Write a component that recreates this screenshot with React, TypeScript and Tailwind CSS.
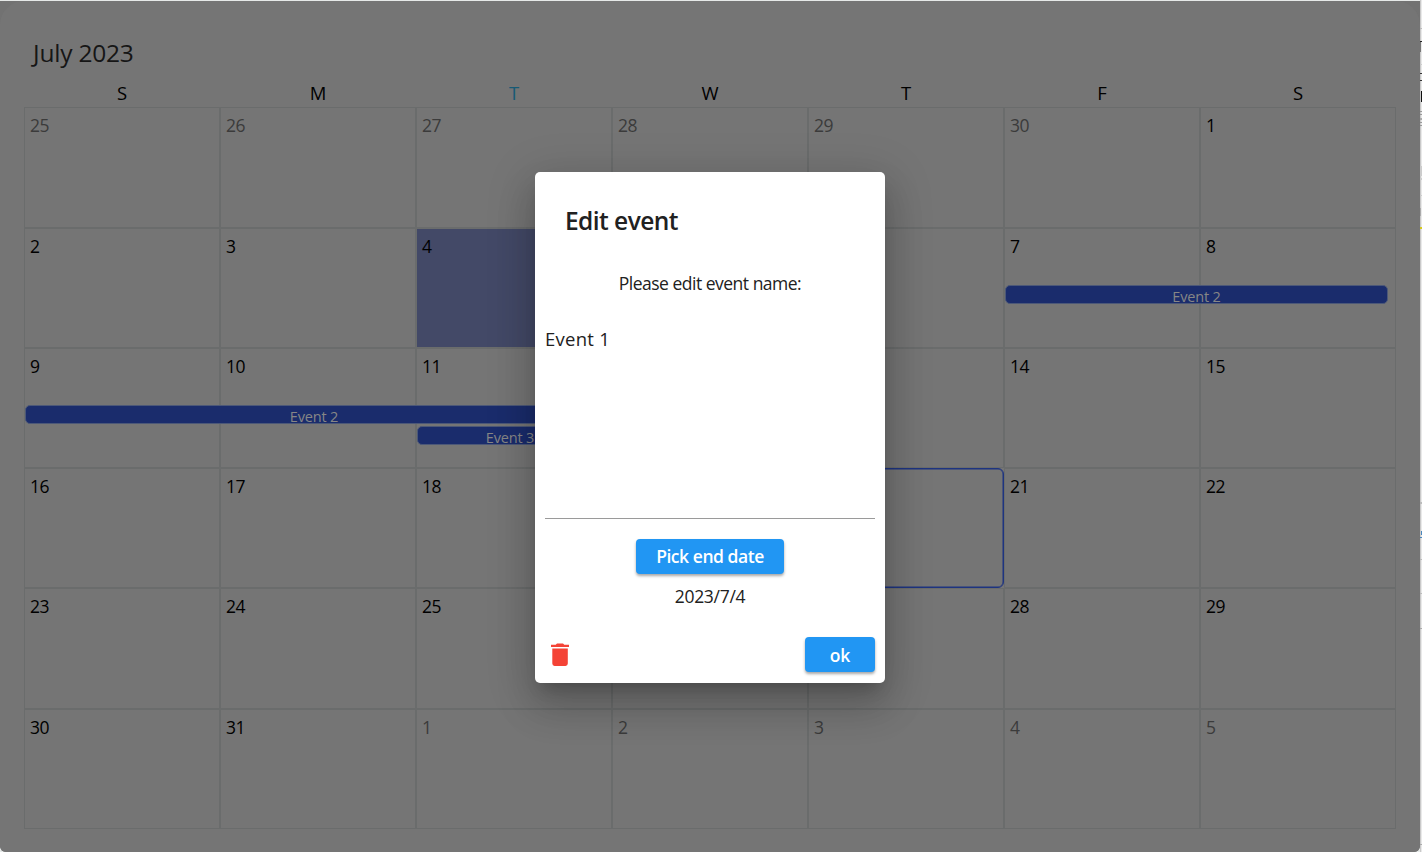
import React from "react";

type Day = { n: number; muted?: boolean; today?: boolean; selected?: boolean };
type CalendarEvent = { label: string; place: string };
type Week = { days: Day[]; height: string; events?: CalendarEvent[] };

const range = (from: number, to: number, muted = false): Day[] =>
  Array.from({ length: to - from + 1 }, (_, i) => ({ n: from + i, muted }));

const weeks: Week[] = [
  { height: "h-[121px]", days: [...range(25, 30, true), { n: 1 }] },
  {
    height: "h-[120px]",
    days: range(2, 8).map((d) => ({ ...d, today: d.n === 4 })),
    events: [{ label: "Event 2", place: "left-[981px] top-[57px] w-[383px]" }],
  },
  {
    height: "h-[120px]",
    days: range(9, 15),
    events: [
      { label: "Event 2", place: "left-[1px] top-[57px] w-[578px]" },
      { label: "Event 3", place: "left-[393px] top-[78px] w-[186px]" },
    ],
  },
  { height: "h-[120px]", days: range(16, 22).map((d) => ({ ...d, selected: d.n === 20 })) },
  { height: "h-[121px]", days: range(23, 29) },
  { height: "h-[120px]", days: [...range(30, 31), ...range(1, 5, true)] },
];

const weekdays = ["S", "M", "T", "W", "T", "F", "S"];

function DayCell({ day }: { day: Day }) {
  const frame = day.selected ? "rounded-[6px] border-[#1e3480] shadow-[inset_0_0_0_0.5px_#1e3480]" : "border-[#6a6c6c]";
  const fill = day.today ? "bg-[#434967]" : "";
  const ink = day.muted ? "text-[#3b3b3b]" : "text-black";
  return (
    <div className={`border pt-[6px] pl-[5px] text-[17.5px] leading-[23px] tracking-[-0.5px] ${frame} ${fill} ${ink}`}>
      {day.n}
    </div>
  );
}

function WeekRow({ week }: { week: Week }) {
  return (
    <div className={`relative grid grid-cols-7 ${week.height}`}>
      {week.days.map((d) => (
        <DayCell key={d.n} day={d} />
      ))}
      {week.events?.map((e) => (
        <div
          key={e.label}
          className={`absolute h-[19px] rounded-[5px] border border-[#4c5878] bg-[#1a2c6c] text-center text-[14.5px] leading-[21px] tracking-[-0.15px] text-[#868686] ${e.place}`}
        >
          {e.label}
        </div>
      ))}
    </div>
  );
}

function PageEdge() {
  return (
    <svg width="2" height="852" viewBox="0 0 2 852" shapeRendering="crispEdges" className="-mt-px shrink-0">
      <rect width="2" height="852" fill="#e9e9e9" />
      <rect width="1" height="852" fill="#c9c9c9" />
      <rect y="28" width="2" height="1" fill="#bbb" />
      <rect y="41" width="2" height="1" fill="#222" />
      <rect y="42" width="1" height="10" fill="#777" />
      <rect y="64" width="2" height="1" fill="#ccc" />
      <rect y="73" width="2" height="1" fill="#333" />
      <rect y="80" width="2" height="1" fill="#333" />
      <rect x="1" y="91" width="1" height="11" fill="#111" />
      <rect y="111" width="2" height="1" fill="#999" />
      <rect y="114" width="2" height="1" fill="#999" />
      <rect y="118" width="2" height="2" fill="#aaa" />
      <rect y="122" width="2" height="1" fill="#999" />
      <rect y="125" width="2" height="1" fill="#999" />
      <rect y="166" width="2" height="10" fill="#ccc" />
      <rect y="178" width="2" height="2" fill="#ccc" />
      <rect y="195" width="2" height="1" fill="#ccc" />
      <rect y="208" width="1" height="8" fill="#aaa" />
      <rect y="227" width="2" height="2" fill="#d5ca22" />
      <rect y="502" width="2" height="2" fill="#bbb" />
      <rect x="1" y="531" width="1" height="4" fill="#4a87bd" />
      <rect y="537" width="2" height="1" fill="#4a87bd" />
      <rect y="559" width="2" height="1" fill="#bbb" />
      <rect y="593" width="2" height="1" fill="#bbb" />
      <rect y="628" width="2" height="1" fill="#aaa" />
      <rect y="844" width="2" height="1" fill="#aaa" />
    </svg>
  );
}

function EditDialog() {
  return (
    <div className="mt-[172.4px] flex h-[510.4px] w-[350px] flex-col rounded-[5px] bg-white text-[#212121] shadow-[0_11px_15px_-7px_rgba(0,0,0,0.2),0_24px_38px_3px_rgba(0,0,0,0.14),0_9px_46px_8px_rgba(0,0,0,0.12)]">
      <h2 className="mt-[31.6px] ml-[30px] text-[24.5px] leading-[34px] font-semibold tracking-[-0.55px]">Edit event</h2>
      <p className="mt-[33.5px] text-center text-[17.5px] leading-[24px] tracking-[-0.5px]">
        Please edit event name:
      </p>
      <div className="mx-[10px] mt-[30.5px] h-[193px] border-b border-[#9a9a9a] text-[18.5px] leading-[25px] tracking-[0.25px]">
        Event 1
      </div>
      <button className="mt-[20px] h-[35px] w-[148px] self-center rounded-[4px] bg-[#2196f3] text-[17.5px] leading-[33px] font-semibold tracking-[-0.45px] text-white shadow-[0_2px_3px_rgba(0,0,0,0.35)]">
        Pick end date
      </button>
      <p className="mt-[10px] text-center text-[17.5px] leading-[24px] tracking-[-0.3px]">2023/7/4</p>
      <div className="mt-[29px] flex items-center justify-between px-[10px]">
        <svg width="30" height="36" viewBox="0 0 30 36" fill="#f44336">
          <path d="M6 7.7h4.7l1.3-1.1h6l1.3 1.1H24v2.2H6zM7.3 11.5h15.5v15.1a2.3 2.3 0 0 1-2.3 2.3H9.6a2.3 2.3 0 0 1-2.3-2.3z" />
        </svg>
        <button className="h-[35px] w-[70px] rounded-[4px] bg-[#2196f3] text-[17.5px] leading-[34px] font-semibold tracking-[-0.1px] text-white shadow-[0_2px_3px_rgba(0,0,0,0.35)]">
          ok
        </button>
      </div>
    </div>
  );
}

export default function App() {
  return (
    <div className="relative flex h-[852px] w-[1422px] overflow-hidden bg-[#e6e9e8] pt-px font-['Open_Sans','Noto_Sans',sans-serif]">
      <main className="h-[851px] w-[1420px] shrink-0 rounded-b-[6px] bg-[#727272]">
        <div className="h-full rounded-t-[24px] rounded-b-[6px] bg-[#757575] px-[24px] pt-[35px]">
          <h1 className="pl-[9px] text-[24.5px] leading-[34px] tracking-[-0.2px] text-[#161616]">July 2023</h1>
          <div className="mt-[11px] grid h-[26px] w-[1372px] grid-cols-7 text-center text-[18.5px] leading-[23px] text-black">
            {weekdays.map((d, i) => (
              <span key={i} className={i === 2 ? "text-[#165a75]" : ""}>{d}</span>
            ))}
          </div>
          <div className="flex w-[1372px] flex-col">
            {weeks.map((w, i) => (
              <WeekRow key={i} week={w} />
            ))}
          </div>
        </div>
      </main>
      <PageEdge />
      <div className="absolute inset-0 flex w-[1420px] justify-center">
        <EditDialog />
      </div>
    </div>
  );
}
